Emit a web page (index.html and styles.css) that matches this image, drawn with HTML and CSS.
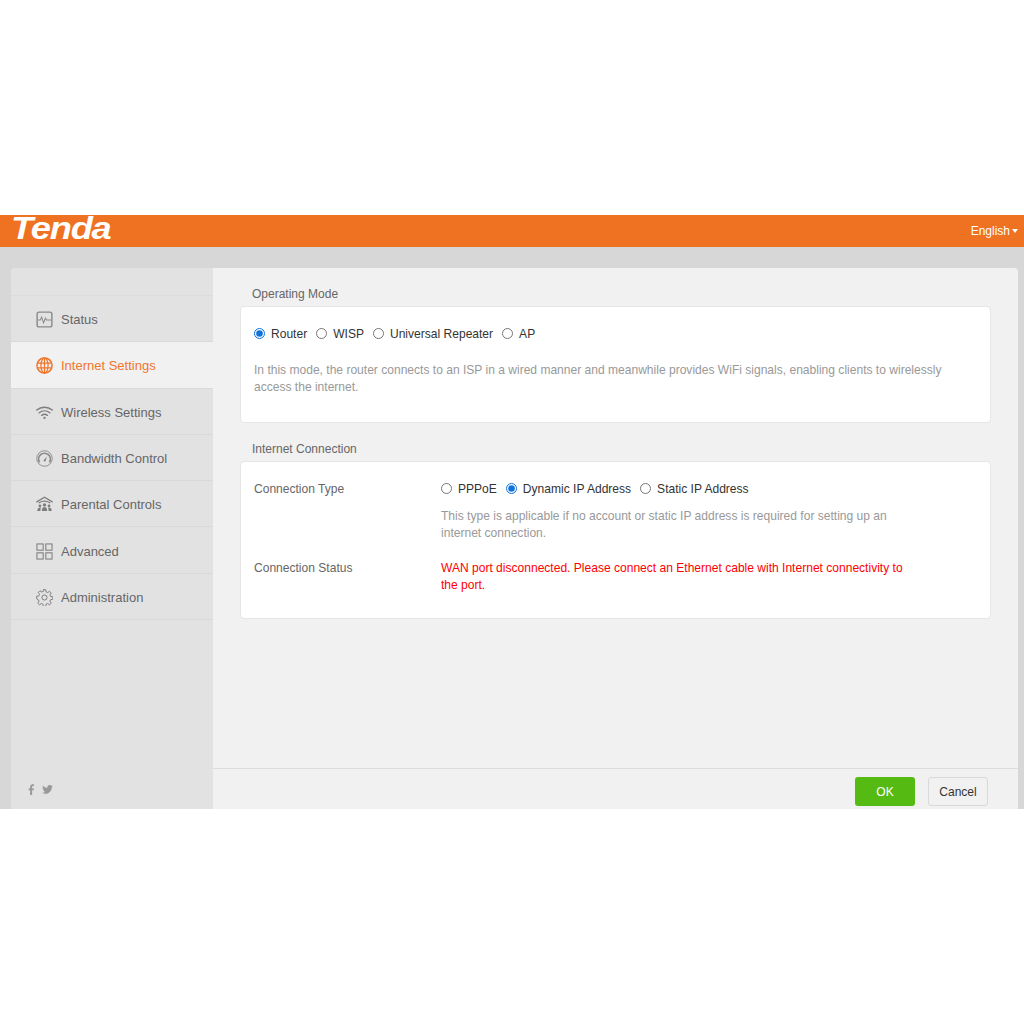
FILE: index.html
```html
<!DOCTYPE html>
<html>
<head>
  <title>Tenda Router</title>
  <link rel="stylesheet" href="styles.css">
</head>
<body>
  <div class="page">
    <div class="header">
      <span class="logo">Tenda</span>
      <span class="lang">English<i class="caret"></i></span>
    </div>
    <div class="main">
      <div class="sidebar">
        <ul class="nav">
          <li class="nav-item">
            <svg class="icon" viewBox="0 0 18 18" fill="none" stroke="#8a8a8a" stroke-width="1.5"><rect x="1.2" y="1.2" width="15.6" height="15.6" rx="2"/><path d="M2 9.500h2.500l1.500-3 2 6 2-5 1.200 2H16" stroke-width="1.100"/></svg>
            Status
          </li>
          <li class="nav-item active">
            <svg class="icon" viewBox="0 0 18 18" fill="none" stroke="#f0762b" stroke-width="1.3"><circle cx="9" cy="9" r="8" stroke-width="1.600"/><ellipse cx="9" cy="9" rx="3.800" ry="8"/><path d="M9 1v16M1.500 6.400h15M1.500 11.600h15"/></svg>
            Internet Settings
          </li>
          <li class="nav-item">
            <svg class="icon" viewBox="0 0 18 18" fill="none" stroke="#7d7d7d" stroke-width="1.500" stroke-linecap="round"><path d="M.8 6.400c4.700-4 11.700-4 16.400 0M3.400 9.300c3.300-2.700 7.900-2.700 11.200 0M6 12c1.800-1.300 4.200-1.300 6 0"/><circle cx="9" cy="14.800" r="1.200" fill="#7d7d7d" stroke="none"/></svg>
            Wireless Settings
          </li>
          <li class="nav-item">
            <svg class="icon" viewBox="0 0 18 18" fill="none" stroke="#8a8a8a" stroke-width="1"><circle cx="9" cy="9" r="8.200"/><path d="M3.800 13a6.200 6.200 0 1 1 10.400 0" stroke-width="1.800"/><path d="M7.800 11.400l3.800-4.600-1.800 5.600z" fill="#7d7d7d" stroke="none"/></svg>
            Bandwidth Control
          </li>
          <li class="nav-item">
            <svg class="icon" viewBox="0 0 18 18" fill="none" stroke="#7d7d7d" stroke-width="1.300"><path d="M.8 6.200L9 1.400l8.200 4.800M3.400 7.200c3.400-2 7.800-2 11.200 0" stroke-linecap="round"/><g fill="#7d7d7d" stroke="none"><circle cx="9" cy="9.400" r="1.800"/><path d="M6.200 16c0-3 1-4.400 2.800-4.400s2.800 1.400 2.800 4.400z"/><circle cx="4.200" cy="10.400" r="1.500"/><path d="M1.400 16c0-2.600 1-3.800 2.800-3.800.4 0 .8.100 1.100.2-.5.900-.7 2.100-.7 3.600z"/><circle cx="13.800" cy="10.400" r="1.500"/><path d="M16.600 16c0-2.600-1-3.800-2.800-3.800-.4 0-.8.100-1.100.2.500.9.700 2.100.7 3.600z"/></g></svg>
            Parental Controls
          </li>
          <li class="nav-item">
            <svg class="icon" viewBox="0 0 18 18" fill="none" stroke="#7d7d7d" stroke-width="1.100"><rect x="1" y="1" width="6.600" height="6.600"/><rect x="10.400" y="1" width="6.600" height="6.600"/><rect x="1" y="10.400" width="6.600" height="6.600"/><rect x="10.400" y="10.400" width="6.600" height="6.600"/></svg>
            Advanced
          </li>
          <li class="nav-item">
            <svg class="icon" viewBox="0 0 24 24" fill="none" stroke="#7d7d7d" stroke-width="1.400" stroke-linejoin="round"><circle cx="12" cy="12" r="3.600"/><path d="M10.300 1h3.400l.6 3.200 2.100.9 2.700-1.800 2.400 2.400-1.800 2.700.9 2.100 3.200.6v3.400l-3.200.6-.9 2.100 1.800 2.700-2.400 2.400-2.700-1.800-2.100.9-.6 3.200h-3.400l-.6-3.200-2.100-.9-2.700 1.800-2.400-2.400 1.800-2.700-.9-2.100L.9 13.700v-3.400l3.200-.6.9-2.100-1.800-2.700 2.400-2.400 2.700 1.800 2.100-.9z"/></svg>
            Administration
          </li>
        </ul>
        <div class="social">
          <svg class="social-f" viewBox="0 0 7 12" fill="#999"><path d="M2 12V6.700H.3V4.800H2V3.300C2 1.300 3.100.4 4.700.4c.7 0 1.300 0 1.600.1v1.800H5.200c-.9 0-1 .4-1 1v1.500h2l-.3 1.900H4.200V12z"/></svg>
          <svg class="social-t" viewBox="0 0 24 20" fill="#999"><path d="M24 2.400c-.9.400-1.800.7-2.800.8 1-.6 1.800-1.600 2.200-2.700-1 .6-2 1-3.100 1.200A4.900 4.900 0 0 0 11.900 6.200C7.800 6 4.200 4.100 1.700.9.300 3.100 1 6 3.200 7.500c-.8 0-1.600-.2-2.200-.6 0 2.300 1.600 4.300 3.900 4.800-.7.200-1.500.2-2.200.1.600 2 2.400 3.300 4.600 3.400A9.900 9.900 0 0 1 0 17.200 14 14 0 0 0 21.500 4.800c1-.6 1.800-1.400 2.500-2.400z"/></svg>
        </div>
      </div>
      <div class="content">
        <div class="scroll">
          <h3 class="section-title">Operating Mode</h3>
          <div class="panel mode-panel">
            <div class="radios">
              <label><input type="radio" name="mode" checked>Router</label>
              <label><input type="radio" name="mode">WISP</label>
              <label><input type="radio" name="mode">Universal Repeater</label>
              <label><input type="radio" name="mode">AP</label>
            </div>
            <p class="hint">In this mode, the router connects to an ISP in a wired manner and meanwhile provides WiFi signals, enabling clients to wirelessly access the internet.</p>
          </div>
          <h3 class="section-title second">Internet Connection</h3>
          <div class="panel conn-panel">
            <div class="row">
              <div class="row-label">Connection Type</div>
              <div class="row-value">
                <div class="radios">
                  <label><input type="radio" name="conn">PPPoE</label>
                  <label><input type="radio" name="conn" checked>Dynamic IP Address</label>
                  <label><input type="radio" name="conn">Static IP Address</label>
                </div>
                <p class="hint">This type is applicable if no account or static IP address is required for setting up an internet connection.</p>
              </div>
            </div>
            <div class="row">
              <div class="row-label">Connection Status</div>
              <div class="row-value error">WAN port disconnected. Please connect an Ethernet cable with Internet connectivity to the port.</div>
            </div>
          </div>
        </div>
        <div class="footer">
          <button class="btn btn-ok">OK</button>
          <button class="btn btn-cancel">Cancel</button>
        </div>
      </div>
    </div>
  </div>
</body>
</html>
```
FILE: styles.css
```css
body {
  margin: 0;
  background: #fff;
  font-family: "Liberation Sans", Arial, sans-serif;
  font-size: 13px;
  color: #666;
}

.page {
  padding-top: 215px;
}

.header {
  height: 32px;
  background: #ef7122;
  display: flex;
  align-items: center;
  justify-content: space-between;
  padding: 0 6px 0 11px;
}

.logo {
  font-size: 31px;
  font-weight: bold;
  font-style: italic;
  color: #fff;
  letter-spacing: -1px;
  line-height: 28px;
  height: 32px;
  transform: scaleX(1.17);
  transform-origin: left center;
}

.lang {
  color: #fff;
  font-size: 12px;
  display: flex;
  align-items: center;
  margin-top: -1px;
}

.caret {
  width: 0;
  height: 0;
  margin-left: 2px;
  border-left: 3.500px solid transparent;
  border-right: 3.500px solid transparent;
  border-top: 4px solid #fff;
}

.main {
  height: 562px;
  box-sizing: border-box;
  padding: 21px 6px 0 11px;
  background: #d7d7d7;
  display: flex;
  overflow: hidden;
}

.sidebar {
  width: 202px;
  flex-shrink: 0;
  background: #e2e2e2;
  border-radius: 4px 0 0 0;
  position: relative;
}

.nav {
  list-style: none;
  margin: 27px 0 0;
  padding: 0;
  border-top: 1px solid #dcdcdc;
}

.nav-item {
  height: 43.300px;
  padding-top: 2px;
  display: flex;
  align-items: center;
  gap: 8px;
  padding-left: 25px;
  border-bottom: 1px solid #d9d9d9;
  font-size: 13px;
  color: #666;
}

.nav-item.active {
  background: #f1f1f1;
  color: #f0762b;
}

.icon {
  width: 17px;
  height: 17px;
  flex-shrink: 0;
}

.social {
  position: absolute;
  left: 17px;
  bottom: 14px;
  display: flex;
  align-items: center;
  gap: 7px;
}

.social-f {
  width: 7px;
  height: 11px;
}

.social-t {
  width: 11px;
  height: 9px;
}

.content {
  flex: 1;
  background: #f1f1f1;
  border-radius: 0 4px 0 0;
  display: flex;
  flex-direction: column;
}

.scroll {
  flex: 1;
  padding: 0 27px;
}

.section-title {
  margin: 0;
  padding: 19px 0 4px 12px;
  font-size: 12px;
  font-weight: normal;
  line-height: 15px;
  color: #666;
}

.section-title.second {
  padding-top: 19px;
  padding-bottom: 4px;
}

.panel {
  background: #fff;
  border: 1px solid #e6e6e6;
  border-radius: 4px;
  padding: 0 13px;
  font-size: 12.050px;
}

.mode-panel {
  height: 117px;
  padding-top: 19px;
  box-sizing: border-box;
}

.conn-panel {
  height: 158px;
  padding-top: 19px;
  box-sizing: border-box;
}

.radios {
  display: flex;
  align-items: center;
  gap: 9px;
  height: 16px;
  color: #333;
}

.radios label {
  display: flex;
  align-items: center;
}

.radios input {
  width: 11px;
  height: 11px;
  margin: 0 6px 2px 0;
  accent-color: #0f72d9;
}

.hint {
  margin: 20px 0 0;
  line-height: 17px;
  color: #999;
}

.row {
  display: flex;
  line-height: 17px;
}

.row + .row {
  margin-top: 18px;
}

.row-label {
  width: 187px;
  flex-shrink: 0;
  color: #666;
}

.row-value {
  width: 470px;
}

.row-value .hint {
  margin-top: 11px;
}

.error {
  color: #f00;
}

.footer {
  height: 41px;
  border-top: 1px solid #dcdcdc;
  display: flex;
  align-items: flex-start;
  justify-content: flex-end;
  gap: 13px;
  padding-right: 30px;
  padding-top: 8px;
  box-sizing: border-box;
}

.btn {
  height: 29px;
  border-radius: 3px;
  font-family: inherit;
  font-size: 12px;
  padding: 0;
}

.btn-ok {
  width: 60px;
  border: none;
  background: #55bb13;
  color: #fff;
}

.btn-cancel {
  width: 60px;
  border: 1px solid #d9d9d9;
  background: #f1f1f1;
  color: #333;
}
```
